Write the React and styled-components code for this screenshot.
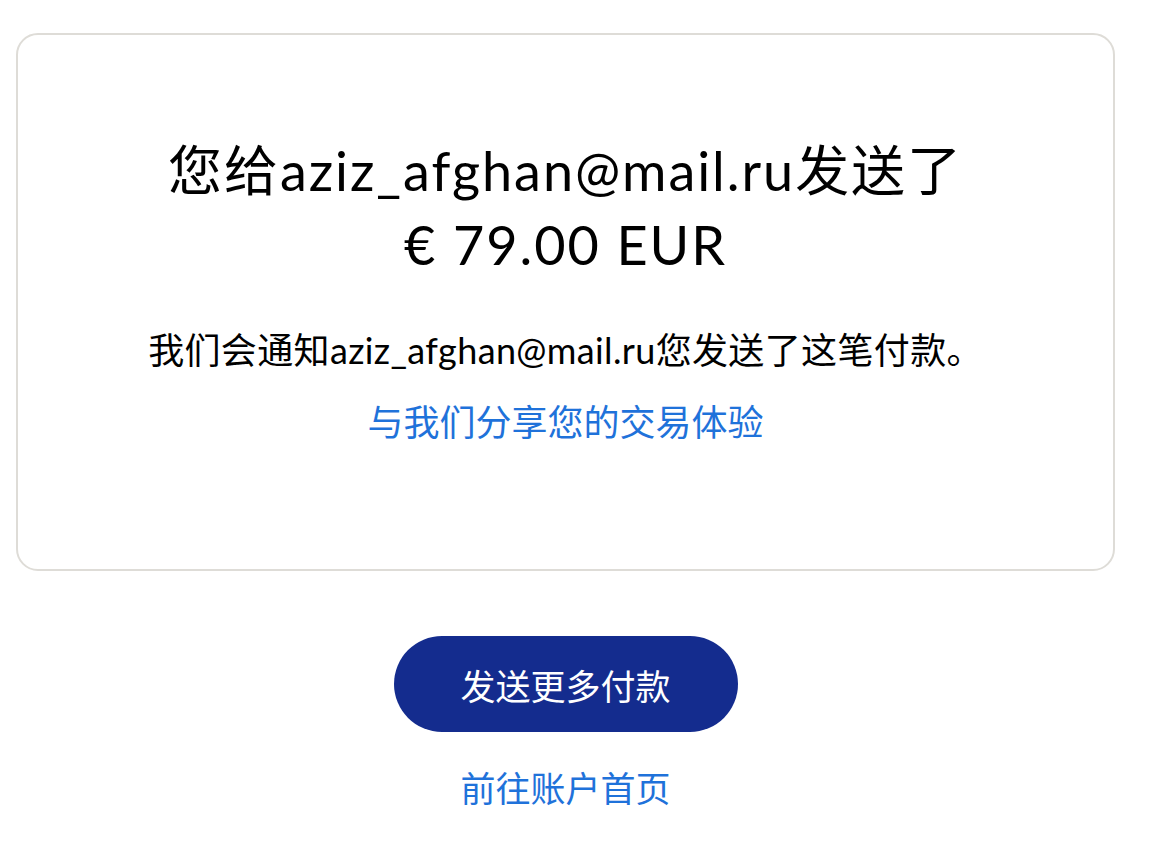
import React from 'react'
import styled, { createGlobalStyle } from 'styled-components'

const GlobalStyle = createGlobalStyle`
  body {
    margin: 0;
    background: #ffffff;
    font-family: Lato, "Noto Sans CJK SC", sans-serif;
    color: #000000;
  }
`

const Page = styled.div`
  display: flex;
  flex-direction: column;
  align-items: center;
  padding: 33px 35px 0 16px;
`

const Card = styled.div`
  box-sizing: border-box;
  width: 100%;
  height: 538px;
  border: 2px solid #dedcd7;
  border-radius: 22px;
  display: flex;
  flex-direction: column;
  align-items: center;
  padding-top: 99px;
`

const Heading = styled.h1`
  margin: 0;
  font-size: 54px;
  font-weight: 400;
  line-height: 74px;
  letter-spacing: 0.036em;
  text-align: center;
`

const Message = styled.p`
  margin: 46px 0 0;
  font-size: 36px;
  line-height: 44px;
  letter-spacing: 0.01em;
  text-align: center;
`

const TextLink = styled.a`
  display: block;
  color: #1f72da;
  text-decoration: none;
  font-size: ${({ size }) => size || 35}px;
  line-height: 44px;
  margin-top: ${({ top }) => top || 0}px;
  cursor: pointer;
`

const Button = styled.button`
  margin-top: 65px;
  width: 344px;
  height: 96px;
  border: none;
  border-radius: 48px;
  background: #142c8e;
  color: #ffffff;
  font-family: Lato, "Noto Sans CJK SC", sans-serif;
  font-size: 35px;
  cursor: pointer;
`

export default function App() {
  return (
    <>
      <GlobalStyle />
      <Page>
        <Card>
          <Heading>
            您给aziz_afghan@mail.ru发送了
            <br />
            € 79.00 EUR
          </Heading>
          <Message>我们会通知aziz_afghan@mail.ru您发送了这笔付款。</Message>
          <TextLink top={28} size={36}>与我们分享您的交易体验</TextLink>
        </Card>
        <Button>发送更多付款</Button>
        <TextLink top={34} size={35}>前往账户首页</TextLink>
      </Page>
    </>
  )
}
